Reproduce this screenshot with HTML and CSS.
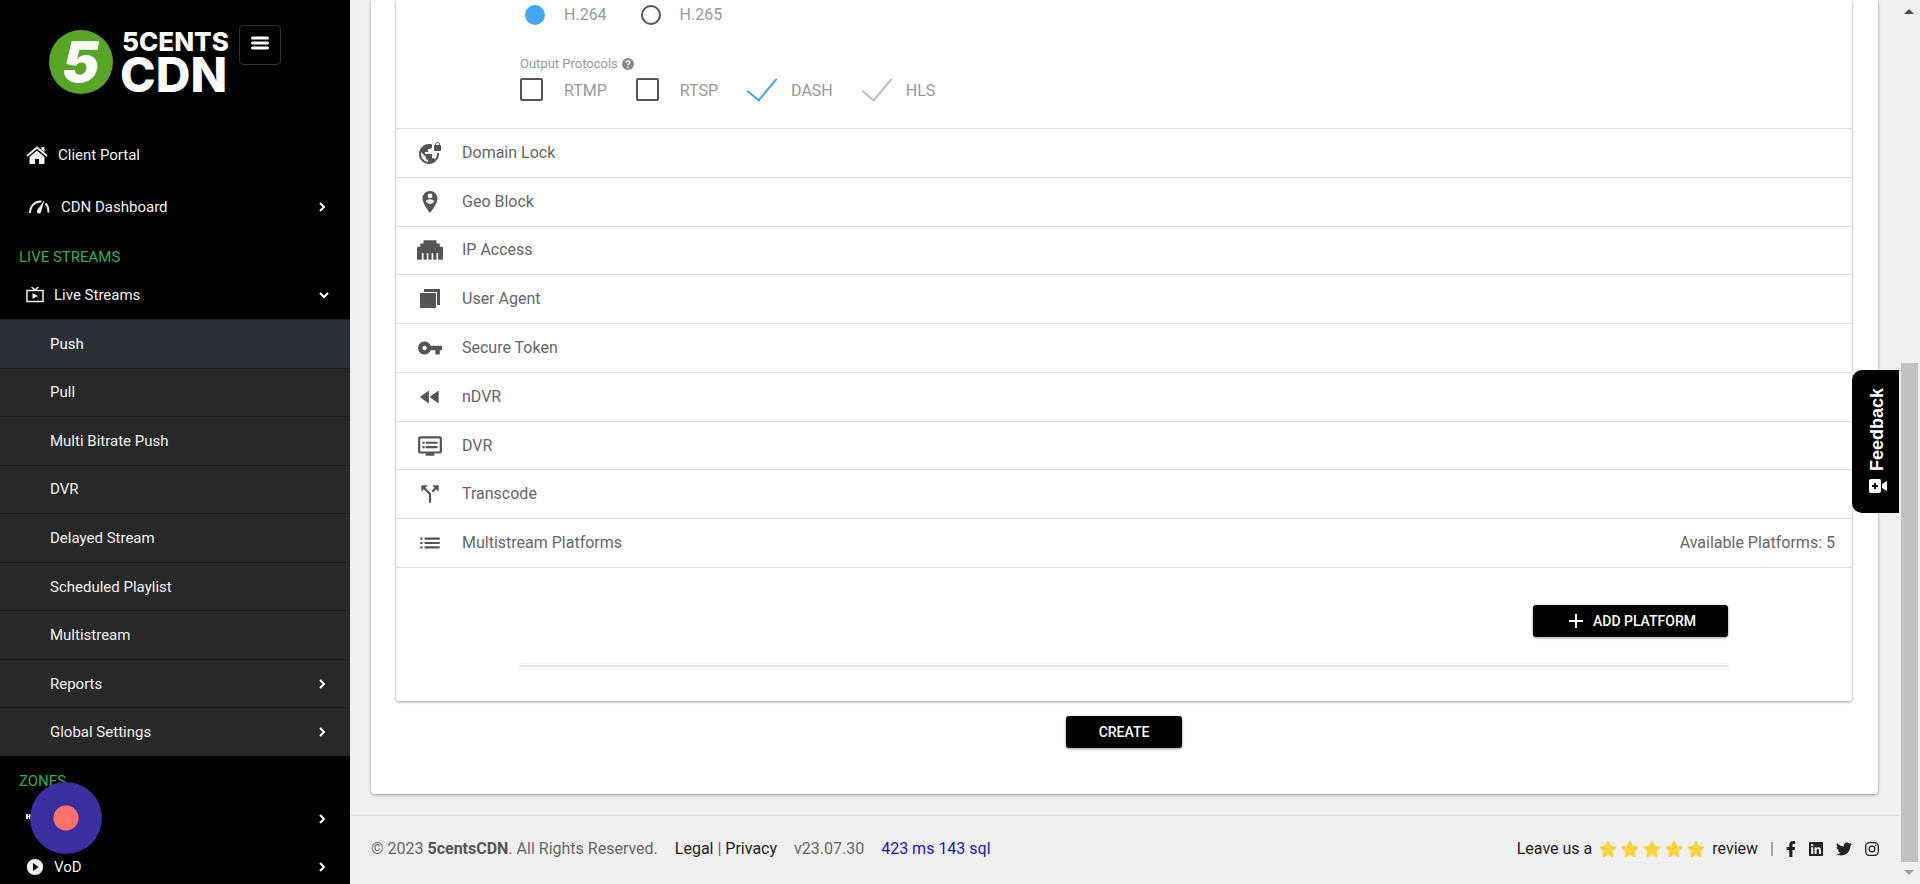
FILE: index.html
```html
<!DOCTYPE html>
<html lang="en">
<head>
  <meta charset="UTF-8" />
  <meta name="viewport" content="width=device-width, initial-scale=1.0" />
  <title>5centsCDN - Push Stream</title>
  <link rel="stylesheet" href="styles.css">
</head>
<body>
  <aside class="sidebar">
    <div class="brand">
      <svg class="logo" width="192" height="84" viewBox="0 0 192 84" role="img" aria-label="5centsCDN">
        <circle cx="33" cy="37" r="32" fill="#58a528" />
        <text x="14" y="57" class="logo-five">5</text>
        <text x="74" y="26" class="logo-top">5CENTS</text>
        <text x="72" y="67" class="logo-bottom">CDN</text>
      </svg>
      <button class="menu-toggle" aria-label="Toggle menu">
        <svg width="18" height="14" viewBox="0 0 18 14"><path d="M1.500 2h15M1.500 7h15M1.500 12h15" stroke="#fff" stroke-width="3" stroke-linecap="round" /></svg>
      </button>
    </div>

    <nav class="menu">
      <a href="#" class="menu-item tall">
        <svg class="icon home" width="22" height="18" viewBox="0 0 22 18"><path d="M11 4.500L3.500 11v6c0 .6.400 1 1 1H9v-5h4v5h4.500c.6 0 1-.4 1-1v-6z" /><path d="M1 10L11 1.500 21 10" fill="none" stroke="#f2f2f2" stroke-width="2" /><path d="M15.500 1h3v5l-3-2.500z" /></svg>
        <span>Client Portal</span>
      </a>
      <a href="#" class="menu-item tall">
        <svg class="icon gauge" width="22" height="14" viewBox="0 0 22 14"><path d="M2 13C2 6 7 1 13.500 1.500M17.500 3.500c2 2 3 5 3 9" fill="none" stroke="#f2f2f2" stroke-width="2" /><path d="M16.500 0L13 12c-.6 1.500-2 2-3.200 1.300-1.100-.7-1.200-2-.5-3.300z" /></svg>
        <span>CDN Dashboard</span>
        <svg class="chevron" width="8" height="12" viewBox="0 0 8 12"><path d="M2 2l4 4-4 4" /></svg>
      </a>
      <h2 class="menu-heading">LIVE STREAMS</h2>
      <a href="#" class="menu-item">
        <svg class="icon tv" width="18" height="16" viewBox="0 0 18 16"><path d="M1 3.500h16v11H1zM5.500 0L9 3l3.500-3" fill="none" stroke="#f2f2f2" stroke-width="1.500" /><path d="M6.500 6v6l5.500-3z" /></svg>
        <span>Live Streams</span>
        <svg class="chevron open" width="12" height="8" viewBox="0 0 12 8"><path d="M2 2l4 4 4-4" /></svg>
      </a>
      <div class="submenu">
        <a href="#" class="active">Push</a>
        <a href="#">Pull</a>
        <a href="#">Multi Bitrate Push</a>
        <a href="#">DVR</a>
        <a href="#">Delayed Stream</a>
        <a href="#">Scheduled Playlist</a>
        <a href="#">Multistream</a>
        <a href="#">Reports <svg class="chevron" width="8" height="12" viewBox="0 0 8 12"><path d="M2 2l4 4-4 4" /></svg></a>
        <a href="#">Global Settings <svg class="chevron" width="8" height="12" viewBox="0 0 8 12"><path d="M2 2l4 4-4 4" /></svg></a>
      </div>
      <h2 class="menu-heading zones">ZONES</h2>
      <a href="#" class="menu-item">
        <svg class="http-mark" width="5" height="5" viewBox="0 0 5 5"><path d="M0 0h2v2h1V0h2v5H3V3H2v2H0z" /></svg>
        <svg class="chevron" width="8" height="12" viewBox="0 0 8 12"><path d="M2 2l4 4-4 4" /></svg>
      </a>
      <a href="#" class="menu-item">
        <svg class="icon vod" width="18" height="16" viewBox="0 0 18 16"><path fill-rule="evenodd" d="M9 0a8.200 8 0 1 0 0 16A8.200 8 0 1 0 9 0zM7 4l5.500 4L7 12z" /></svg>
        <span>VoD</span>
        <svg class="chevron" width="8" height="12" viewBox="0 0 8 12"><path d="M2 2l4 4-4 4" /></svg>
      </a>
    </nav>
  </aside>

  <div class="page">
    <main class="card">
      <div class="panel">
        <div class="stream-options">
          <div class="options">
            <label><input type="radio" name="codec" checked /> H.264</label>
            <label><input type="radio" name="codec" /> H.265</label>
          </div>
          <p class="field-title">Output Protocols
            <svg width="12" height="12" viewBox="0 0 12 12"><circle cx="6" cy="6" r="6" fill="#8a8a8a" /><path d="M4.200 4.600c.1-2.300 3.700-2.200 3.600-.1C7.800 5.800 6 5.700 6 7.200M6 8.300v1.400" fill="none" stroke="#fff" stroke-width="1.400" /></svg>
          </p>
          <div class="options">
            <label><input type="checkbox" /> RTMP</label>
            <label><input type="checkbox" /> RTSP</label>
            <label><input type="checkbox" checked /> DASH</label>
            <label><input type="checkbox" checked disabled /> HLS</label>
          </div>
        </div>

        <div class="accordion">
          <div class="row">
            <svg width="26" height="24" viewBox="0 0 24 24"><path d="M22 4v-.5C22 2.120 20.880 1 19.500 1S17 2.120 17 3.500V4c-.55 0-1 .45-1 1v4c0 .55.45 1 1 1h5c.55 0 1-.45 1-1V5c0-.55-.45-1-1-1zm-.8 0h-3.400v-.5c0-.94.76-1.700 1.700-1.700s1.700.76 1.700 1.700V4zm-2.280 8c.04.33.08.66.08 1 0 2.080-.8 3.970-2.100 5.390-.26-.81-1-1.390-1.900-1.390h-1v-3c0-.55-.45-1-1-1H7v-2h2c.55 0 1-.45 1-1V8h2c1.100 0 2-.9 2-2V3.460c-.95-.3-1.950-.46-3-.46C5.480 3 1 7.480 1 13s4.480 10 10 10 10-4.480 10-10c0-.34-.02-.67-.05-1h-2.030zM10 20.930c-3.950-.49-7-3.850-7-7.930 0-.62.08-1.210.21-1.790L8 16v1c0 1.100.9 2 2 2v1.930z" /></svg>
            <span>Domain Lock</span>
          </div>
          <div class="row">
            <svg width="26" height="24" viewBox="0 0 24 24"><path d="M12 1C8.100 1 4.500 4.100 4.500 8.300 4.500 14 12 23 12 23s7.500-9 7.500-14.700C19.500 4.100 15.900 1 12 1zm0 2.500a2.400 2.400 0 1 1 0 4.800 2.400 2.400 0 0 1 0-4.800zM12 14c-1.700 0-3.300-.9-4.200-2.400.1-1.600 2.800-2.300 4.200-2.300s4.100.7 4.200 2.300C15.300 13.100 13.700 14 12 14z" /></svg>
            <span>Geo Block</span>
          </div>
          <div class="row">
            <svg width="26" height="26" viewBox="0 0 512 512"><path d="M496 192h-48v-48c0-8.800-7.200-16-16-16h-48V80c0-8.800-7.200-16-16-16H144c-8.800 0-16 7.200-16 16v48H80c-8.800 0-16 7.200-16 16v48H16c-8.800 0-16 7.200-16 16v224c0 8.800 7.200 16 16 16h80V320h32v128h64V320h32v128h64V320h32v128h64V320h32v128h80c8.800 0 16-7.200 16-16V208c0-8.800-7.200-16-16-16z" /></svg>
            <span>IP Access</span>
          </div>
          <div class="row">
            <svg width="26" height="24" viewBox="0 0 26 24"><path d="M7 2h16v16h-3V5H7zM3 6h16v15H3z" /></svg>
            <span>User Agent</span>
          </div>
          <div class="row">
            <svg width="26" height="26" viewBox="0 0 24 24"><path d="M12.650 10C11.830 7.670 9.610 6 7 6c-3.310 0-6 2.690-6 6s2.690 6 6 6c2.610 0 4.830-1.670 5.650-4H17v4h4v-4h2v-4H12.650zM7 14c-1.100 0-2-.9-2-2s.9-2 2-2 2 .9 2 2-.9 2-2 2z" /></svg>
            <span>Secure Token</span>
          </div>
          <div class="row">
            <svg width="26" height="26" viewBox="0 0 24 24"><path d="M11 18V6l-8.500 6 8.500 6zm.5-6l8.500 6V6l-8.500 6z" /></svg>
            <span>nDVR</span>
          </div>
          <div class="row">
            <svg width="26" height="26" viewBox="0 0 24 24"><path d="M21 3H3c-1.100 0-2 .9-2 2v12c0 1.100.9 2 2 2h5v2h8v-2h5c1.100 0 1.990-.9 1.990-2L23 5c0-1.100-.9-2-2-2zm0 14H3V5h18v12zm-2-9H8v2h11V8zm0 4H8v2h11v-2zM7 8H5v2h2V8zm0 4H5v2h2v-2z" /></svg>
            <span>DVR</span>
          </div>
          <div class="row">
            <svg width="26" height="26" viewBox="0 0 24 24"><path d="M14 4l2.290 2.290-2.880 2.880 1.420 1.420 2.880-2.880L20 10V4zm-4 0H4v6l2.290-2.290 4.710 4.700V20h2v-8.410l-5.290-5.300z" /></svg>
            <span>Transcode</span>
          </div>
          <div class="row">
            <svg width="26" height="26" viewBox="0 0 24 24"><path d="M3 13h2v-2H3v2zm0 4h2v-2H3v2zm0-8h2V7H3v2zm4 4h14v-2H7v2zm0 4h14v-2H7v2zM7 7v2h14V7H7z" /></svg>
            <span>Multistream Platforms</span>
            <span class="available">Available Platforms: 5</span>
          </div>
        </div>

        <div class="platforms">
          <button class="btn btn-add">
            <svg width="14" height="14" viewBox="0 0 14 14"><path d="M7 0v14M0 7h14" stroke="#fff" stroke-width="2" /></svg>
            ADD PLATFORM
          </button>
          <div class="platform-list"></div>
        </div>
      </div>
      <button class="btn btn-create">CREATE</button>
    </main>

    <footer class="footer">
      <div class="footer-left">
        <span>© 2023 <b>5centsCDN</b>. All Rights Reserved.</span>
        <span class="legal"><a href="#">Legal</a> | <a href="#">Privacy</a></span>
        <span class="version">v23.07.30</span>
        <span class="timing">423 ms 143 sql</span>
      </div>
      <div class="footer-right">
        <a href="#" class="review">
          <span>Leave us a</span>
          <span class="stars">
            <svg width="18" height="16" viewBox="0 0 576 512"><path id="star" d="M259.300 17.800L194 150.200 47.900 171.500c-26.200 3.800-36.700 36.100-17.700 54.600l105.700 103-25 145.500c-4.500 26.300 23.200 46 46.400 33.700L288 439.600l130.700 68.700c23.200 12.200 50.900-7.400 46.400-33.700l-25-145.500 105.700-103c19-18.500 8.500-50.800-17.700-54.600L382 150.200 316.700 17.800c-11.700-23.600-45.600-23.900-57.400 0z" /></svg>
            <svg width="18" height="16" viewBox="0 0 576 512"><use href="#star" /></svg>
            <svg width="18" height="16" viewBox="0 0 576 512"><use href="#star" /></svg>
            <svg width="18" height="16" viewBox="0 0 576 512"><use href="#star" /></svg>
            <svg width="18" height="16" viewBox="0 0 576 512"><use href="#star" /></svg>
          </span>
          <span>review</span>
        </a>
        <span class="divider">|</span>
        <div class="social">
          <a href="#" aria-label="Facebook"><svg width="10" height="16" viewBox="0 0 320 512"><path d="M279.140 288l14.220-92.660h-88.910v-60.130c0-25.350 12.420-50.060 52.240-50.060h40.420V6.260S260.430 0 225.360 0c-73.220 0-121.080 44.380-121.080 124.720v70.620H22.890V288h81.390v224h100.170V288z" /></svg></a>
          <a href="#" aria-label="LinkedIn"><svg width="14" height="16" viewBox="0 0 448 512"><path d="M416 32H31.900C14.300 32 0 46.500 0 64.300v383.400C0 465.500 14.300 480 31.900 480H416c17.600 0 32-14.500 32-32.300V64.300c0-17.800-14.400-32.300-32-32.300zM135.400 416H69V202.200h66.500V416zm-33.200-243c-21.300 0-38.500-17.300-38.500-38.500S80.900 96 102.200 96c21.200 0 38.500 17.300 38.500 38.500 0 21.300-17.200 38.500-38.500 38.500zm282.100 243h-66.400V312c0-24.800-.5-56.700-34.500-56.700-34.600 0-39.900 27-39.900 54.900V416h-66.400V202.200h63.700v29.200h.9c8.900-16.800 30.600-34.500 62.900-34.500 67.200 0 79.700 44.300 79.700 101.900V416z" /></svg></a>
          <a href="#" aria-label="Twitter"><svg width="16" height="16" viewBox="0 0 512 512"><path d="M459.370 151.716c.325 4.548.325 9.097.325 13.645 0 138.720-105.583 298.558-298.558 298.558-59.452 0-114.680-17.219-161.137-47.106 8.447.974 16.568 1.299 25.340 1.299 49.055 0 94.213-16.568 130.274-44.832-46.132-.975-84.792-31.188-98.112-72.772 6.498.974 12.995 1.624 19.818 1.624 9.421 0 18.843-1.300 27.614-3.573-48.081-9.747-84.143-51.980-84.143-102.985v-1.299c13.969 7.797 30.214 12.670 47.431 13.319-28.264-18.843-46.781-51.005-46.781-87.391 0-19.492 5.197-37.360 14.294-52.954 51.655 63.675 129.300 105.258 216.365 109.807-1.624-7.797-2.599-15.918-2.599-24.040 0-57.828 46.782-104.934 104.934-104.934 30.213 0 57.502 12.670 76.670 33.137 23.715-4.548 46.456-13.320 66.599-25.340-7.798 24.366-24.366 44.833-46.132 57.827 21.117-2.273 41.584-8.122 60.426-16.243-14.292 20.791-32.161 39.308-52.628 54.253z" /></svg></a>
          <a href="#" aria-label="Instagram"><svg width="14" height="14" viewBox="0 0 14 14"><rect x=".7" y=".7" width="12.600" height="12.600" rx="3.500" fill="none" stroke="#212121" stroke-width="1.300" /><circle cx="7" cy="7" r="2.900" fill="none" stroke="#212121" stroke-width="1.300" /><circle cx="10.700" cy="3.300" r=".9" /></svg></a>
        </div>
      </div>
    </footer>
  </div>

  <div class="scrollbar" aria-hidden="true">
    <span class="arrow up"></span>
    <span class="thumb"></span>
    <span class="arrow down"></span>
  </div>

  <button class="feedback">
    <svg width="14" height="18" viewBox="0 0 14 18"><path fill-rule="evenodd" d="M2 6h10q2 0 2 2v8q0 2-2 2H2q-2 0-2-2V8q0-2 2-2zM6 9v2H4v2h2v2h2v-2h2v-2H8V9z" /><path d="M2 0h10L9 5H5z" /></svg>
    <span>Feedback</span>
  </button>
  <button class="recorder" aria-label="Record"></button>
</body>
</html>
```
FILE: styles.css
```css
* {
  box-sizing: border-box;
}

body {
  margin: 0;
  height: 100vh;
  overflow: hidden;
  display: grid;
  grid-template-columns: 350px 1fr 21px;
  font-family: Roboto, sans-serif;
  font-size: 16px;
  line-height: 24px;
  color: #666;
  background-color: #f0f0f0;
}

a {
  color: inherit;
  text-decoration: none;
}

button {
  font-family: inherit;
  border: none;
  cursor: pointer;
}

/* sidebar */
.sidebar {
  height: 100vh;
  overflow: hidden;
  background-color: #000;
  color: #f2f2f2;
  font-size: 15px;
}

.brand {
  display: flex;
  align-items: flex-start;
  height: 129px;
  padding: 25px 0 0 48px;
}

.logo {
  fill: #fff;
  font-family: Inter, sans-serif;
  font-weight: 800;
}

.logo-five {
  font-size: 56px;
  font-style: italic;
  font-weight: 900;
}

.logo-top {
  font-size: 26px;
}

.logo-bottom {
  font-size: 48px;
}

.menu-toggle {
  display: flex;
  align-items: center;
  justify-content: center;
  width: 42px;
  height: 40px;
  margin-left: -1px;
  padding: 0 0 4px;
  background: none;
  border: 1px solid #333;
  border-radius: 4px;
}

.menu-item {
  display: flex;
  align-items: center;
  height: 48px;
  padding: 0 24px 0 26px;
}

.menu-item.tall {
  height: 52px;
}

.icon {
  fill: #f2f2f2;
  margin-right: 10px;
}

.gauge {
  margin: 0 11px 0 2px;
}

.chevron {
  margin-left: auto;
  fill: none;
  stroke: #fff;
  stroke-width: 2;
}

.chevron.open {
  margin-right: -4px;
}

.menu-heading {
  height: 38px;
  margin: 0;
  padding: 12px 19px 0;
  font-size: 15px;
  font-weight: 400;
  color: #2fae52;
}

.menu-heading.zones {
  height: 39px;
  padding-top: 13px;
}

.submenu {
  display: grid;
  grid-auto-rows: 1fr;
  min-height: 437px;
  background-color: #282828;
}

.submenu a {
  display: flex;
  align-items: center;
  padding: 0 24px 0 50px;
  border-top: 1px solid #1e1e1e;
}

.submenu .active {
  background-color: #2b2f3a;
  color: #fff;
}

.http-mark {
  margin-bottom: 6px;
  fill: #f2f2f2;
}

/* content */
.page {
  display: flex;
  flex-direction: column;
  min-width: 0;
}

.card {
  margin: 0 21px;
  padding: 0 26px 46px 25px;
  background-color: #fff;
  border-radius: 0 0 4px 4px;
  box-shadow: 0 1px 3px rgba(0, 0, 0, 0.4);
  text-align: center;
}

.panel {
  text-align: left;
  border-radius: 0 0 2px 2px;
  box-shadow: 0 1px 3px rgba(0, 0, 0, 0.4);
}

.stream-options {
  padding: 3px 124px 24px;
  color: #999;
}

.options {
  display: flex;
  gap: 29px;
}

.options label {
  display: flex;
  align-items: center;
}

.options input {
  appearance: none;
  flex: none;
  width: 23px;
  height: 23px;
  margin: 0 21px 3px 0;
  border: 2px solid #555;
  border-radius: 2px;
}

.options input[type="radio"] {
  width: 20px;
  height: 20px;
  margin: 0 19px 0 5px;
  border-radius: 50%;
}

.options input[type="radio"]:checked {
  background-color: #42a5f5;
  border-color: #42a5f5;
}

.options input[type="checkbox"]:checked {
  border-color: transparent;
}

.options input[type="checkbox"]:checked::before {
  content: "";
  display: block;
  width: 14px;
  height: 27px;
  margin: -9px 0 0 5px;
  border: solid #42a5f5;
  border-width: 0 2px 2px 0;
  transform: rotate(40deg);
}

.options input[type="checkbox"]:disabled::before {
  border-color: #bdbdbd;
}

.field-title {
  display: flex;
  align-items: center;
  gap: 4px;
  margin: 25px 0 2px;
  font-size: 13px;
}

.accordion {
  display: grid;
  grid-auto-rows: 1fr;
  min-height: 440px;
  border-bottom: 1px solid #ddd;
}

.row {
  display: flex;
  align-items: center;
  gap: 19px;
  padding: 0 17px 0 21px;
  border-top: 1px solid #ddd;
}

.row svg {
  fill: #555;
}

.available {
  margin-left: auto;
}

.platforms {
  padding: 37px 124px 36px;
  text-align: right;
}

.btn {
  height: 32px;
  padding: 0 33px;
  background-color: #000;
  color: #fff;
  border-radius: 3px;
  font-size: 14px;
  font-weight: 500;
  box-shadow: 0 1px 3px rgba(0, 0, 0, 0.4);
}

.btn-add {
  display: inline-flex;
  align-items: center;
  gap: 10px;
  padding: 0 32px 0 36px;
}

.platform-list {
  margin-top: 27px;
  height: 1px;
  box-shadow: 0 1px 3px rgba(0, 0, 0, 0.4);
}

.btn-create {
  margin-top: 15px;
}

.footer {
  display: flex;
  justify-content: space-between;
  margin-top: 21px;
  padding: 21px 20px 21px 21px;
  border-top: 1px solid #dcdfe6;
}

.footer-left,
.footer-right,
.review,
.stars,
.social {
  display: flex;
  align-items: center;
}

.legal {
  margin: 0 17px;
}

.legal a,
.footer-right {
  color: #212121;
}

.footer-left b {
  color: #555;
}

.timing {
  margin-left: 17px;
  color: #1a10c8;
}

.review {
  gap: 7px;
}

.stars {
  gap: 4px;
  fill: #fdd340;
}

.divider {
  margin: 0 12px;
  color: #777;
}

.social {
  gap: 13px;
  fill: #212121;
}

.social a {
  display: flex;
}

/* scroll track on the right edge */
.scrollbar {
  display: flex;
  flex-direction: column;
  align-items: center;
  padding: 9px 1px 9px 0;
}

.arrow {
  border: 5px solid transparent;
}

.arrow.up {
  border-top: 0;
  border-bottom-color: #505050;
}

.arrow.down {
  margin-top: 8px;
  border-bottom: 0;
  border-top-color: #a0a0a0;
}

.thumb {
  width: 17px;
  height: 499px;
  margin-top: auto;
  background-color: #c1c1c1;
}

/* floating widgets */
.feedback {
  position: fixed;
  right: 21px;
  top: 370px;
  display: flex;
  flex-direction: column-reverse;
  align-items: center;
  gap: 6px;
  width: 47px;
  height: 143px;
  padding: 18px 0 18px 4px;
  background-color: #000;
  color: #fff;
  fill: #fff;
  border-radius: 10px 0 0 10px;
  font-family: "Liberation Sans", sans-serif;
  font-size: 18px;
  font-weight: bold;
}

.feedback span {
  writing-mode: vertical-rl;
  transform: rotate(180deg);
}

.feedback svg {
  transform: rotate(90deg);
}

.recorder {
  position: fixed;
  left: 30px;
  top: 782px;
  width: 72px;
  height: 72px;
  padding: 0;
  border-radius: 50%;
  background: radial-gradient(circle, #ff7169 12px, #3a2fa0 13px);
}
```
